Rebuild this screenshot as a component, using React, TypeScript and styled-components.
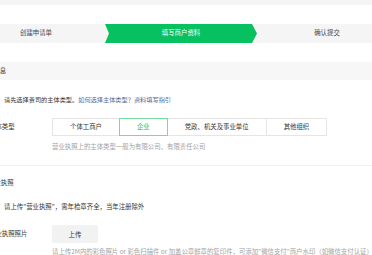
import styled, { createGlobalStyle } from "styled-components";

const GlobalStyle = createGlobalStyle`
  body {
    margin: 0;
    background: #ffffff;
    font-family: "Noto Sans CJK SC", "Noto Sans", sans-serif;
    color: #353535;
  }
`;

const Page = styled.div`
  width: 372px;
  height: 255px;
  overflow: hidden;
  font-size: 6.4px;
  line-height: 1;
`;

const TopBar = styled.div`
  height: 5px;
  background-color: #f5f5f5;
`;

const Steps = styled.div`
  display: grid;
  grid-template-columns: 138px 152px 140px;
  height: 19px;
  margin: 19px 0 0 -33px;
  background-color: #f5f5f5;
`;

const Step = styled.div<{ active?: boolean }>`
  display: flex;
  align-items: center;
  justify-content: center;
  color: ${(props) => (props.active ? "#ffffff" : "#4a4a4a")};
  background-color: ${(props) => (props.active ? "#07c160" : "transparent")};
  clip-path: ${(props) =>
    props.active
      ? "polygon(0 0, calc(100% - 5px) 0, 100% 50%, calc(100% - 5px) 100%, 0 100%, 4px 50%)"
      : "none"};
`;

const SectionBand = styled.div`
  height: 18px;
  margin-top: 19px;
  display: flex;
  align-items: center;
  background-color: #f7f7f7;
  text-indent: -19.4px;
`;

const Content = styled.div`
  margin-left: -11px;
`;

const Intro = styled.p`
  margin: 10px 0 0 15px;
  line-height: 20px;
  white-space: nowrap;
  font-size: 6.2px;
`;

const Link = styled.a`
  color: #576b95;
  text-decoration: none;
`;

const FormRow = styled.div<{ gap: number }>`
  display: flex;
  align-items: center;
  height: 18px;
  margin-top: ${(props) => props.gap}px;
`;

const Label = styled.div`
  flex: 0 0 63px;
  white-space: nowrap;
`;

const Options = styled.div`
  display: flex;
`;

const Option = styled.div<{ selected?: boolean }>`
  position: relative;
  z-index: ${(props) => (props.selected ? 1 : 0)};
  height: 18px;
  padding: 0 17px;
  margin-left: -1px;
  display: flex;
  align-items: center;
  box-sizing: border-box;
  white-space: nowrap;
  background: #ffffff;
  border: 1px solid ${(props) => (props.selected ? "#7ad9a0" : "#e5e5e5")};
  color: ${(props) => (props.selected ? "#07c160" : "#353535")};
  &:first-child {
    margin-left: 0;
  }
`;

const Hint = styled.p<{ gap: number }>`
  margin: ${(props) => props.gap}px 0 0 63px;
  line-height: 10px;
  color: #a3a3a3;
  white-space: nowrap;
`;

const Divider = styled.div`
  height: 1px;
  margin-top: 13px;
  background-color: #f2f2f2;
`;

const SectionTitle = styled.h3`
  margin: 12px 0 0 -1px;
  font-size: 6.4px;
  font-weight: normal;
  line-height: 10px;
`;

const Notice = styled.p`
  margin: 14px 0 0 15px;
  line-height: 10px;
  white-space: nowrap;
`;

const UploadButton = styled.button`
  width: 46px;
  height: 18px;
  padding: 0;
  border: none;
  border-radius: 2px;
  background-color: #f2f2f2;
  color: #353535;
  font-family: inherit;
  font-size: 6.4px;
`;

const subjectTypes = ["个体工商户", "企业", "党政、机关及事业单位", "其他组织"];

function App() {
  return (
    <Page>
      <GlobalStyle />
      <TopBar />
      <Steps>
        <Step>创建申请单</Step>
        <Step active>填写商户资料</Step>
        <Step>确认提交</Step>
      </Steps>
      <SectionBand>主体信息</SectionBand>
      <Content>
        <Intro>
          请先选择贵司的主体类型。<Link href="#">如何选择主体类型？资料填写指引</Link>
        </Intro>
        <FormRow gap={8}>
          <Label>主体类型</Label>
          <Options>
            {subjectTypes.map((type) => (
              <Option key={type} selected={type === "企业"}>
                {type}
              </Option>
            ))}
          </Options>
        </FormRow>
        <Hint gap={6}>营业执照上的主体类型一般为有限公司、有限责任公司</Hint>
        <Divider />
        <SectionTitle>营业执照</SectionTitle>
        <Notice>请上传"营业执照"，需年检章齐全，当年注册除外</Notice>
        <FormRow gap={13}>
          <Label>营业执照照片</Label>
          <UploadButton>上传</UploadButton>
        </FormRow>
        <Hint gap={4}>
          请上传2M内的彩色照片 or 彩色扫描件 or 加盖公章鲜章的复印件，可添加"微信支付"商户水印（如微信支付认证）
        </Hint>
      </Content>
    </Page>
  );
}

export default App;
